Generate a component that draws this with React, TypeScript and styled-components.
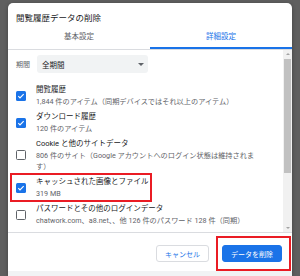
import styled, { createGlobalStyle } from "styled-components";

const GlobalStyle = createGlobalStyle`
  html, body {
    margin: 0;
    padding: 0;
    background: #5f5f5f;
    height: 276px;
    overflow: hidden;
  }
  body {
    font-family: Roboto, "Noto Sans CJK JP", sans-serif;
  }
`;

const Dialog = styled.div`
  margin: 3px 0 0 8px;
  width: 284px;
  background: #ffffff;
  border-radius: 5px 5px 0 0;
  display: flex;
  flex-direction: column;
  box-shadow: 0 1px 4px rgba(0, 0, 0, 0.3);
`;

const Title = styled.div`
  padding: 9px 0 0 8px;
  font-size: 8.5px;
  line-height: 12px;
  color: #202124;
`;

const Tabs = styled.div`
  display: flex;
  margin-top: 3px;
  border-bottom: 1px solid #dadce0;
`;

const Tab = styled.div<{ active?: boolean }>`
  flex: 1;
  text-align: center;
  font-size: 7.5px;
  line-height: 12px;
  padding: 4px 0;
  color: ${({ active }) => (active ? "#1a73e8" : "#5f6368")};
  border-bottom: 2px solid ${({ active }) => (active ? "#1a73e8" : "transparent")};
`;

const Body = styled.div`
  display: flex;
  height: 182px;
  border-bottom: 1px solid #dadce0;
`;

const Content = styled.div`
  flex: 1;
  padding: 5px 0 0 8px;
  display: flex;
  flex-direction: column;
  overflow: hidden;
`;

const PeriodRow = styled.div`
  display: flex;
  align-items: center;
  gap: 7px;
  margin-bottom: 9px;
`;

const PeriodLabel = styled.span`
  font-size: 7px;
  color: #5f6368;
  width: 14px;
`;

const Select = styled.div`
  width: 111px;
  height: 18px;
  box-sizing: border-box;
  background: #f1f3f4;
  border-radius: 3px;
  display: flex;
  align-items: center;
  justify-content: space-between;
  padding: 0 4px 0 5px;
  font-size: 7.5px;
  color: #202124;
`;

const Caret = styled.span`
  width: 0;
  height: 0;
  border-left: 3px solid transparent;
  border-right: 3px solid transparent;
  border-top: 3px solid #5f6368;
`;

const Item = styled.div`
  position: relative;
  display: flex;
  align-items: center;
  padding: 2px 0;
`;

const Box = styled.span<{ checked?: boolean }>`
  width: 10px;
  height: 10px;
  box-sizing: border-box;
  border-radius: 1.5px;
  flex-shrink: 0;
  margin-right: 10px;
  display: flex;
  align-items: center;
  justify-content: center;
  background: ${({ checked }) => (checked ? "#1a73e8" : "#ffffff")};
  border: ${({ checked }) => (checked ? "none" : "1.5px solid #5f6368")};
`;

const Texts = styled.div`
  display: flex;
  flex-direction: column;
`;

const ItemTitle = styled.div`
  font-size: 7.5px;
  line-height: 12px;
  color: #202124;
  white-space: nowrap;
`;

const ItemSub = styled.div`
  font-size: 7.2px;
  line-height: 11px;
  color: #5f6368;
  width: 224px;
`;

const Highlight = styled.div<{ w: number; h: number; l: number; t: number }>`
  position: absolute;
  left: ${({ l }) => l}px;
  top: ${({ t }) => t}px;
  width: ${({ w }) => w}px;
  height: ${({ h }) => h}px;
  border: 2px solid #ea1c24;
  box-sizing: border-box;
  pointer-events: none;
`;

const Scrollbar = styled.div`
  width: 9px;
  background: #f1f1f1;
  display: flex;
  flex-direction: column;
  align-items: center;
`;

const Arrow = styled.span<{ down?: boolean }>`
  margin: 3px 0;
  width: 0;
  height: 0;
  border-left: 2px solid transparent;
  border-right: 2px solid transparent;
  ${({ down }) =>
    down ? "border-top: 2px solid #a3a3a3;" : "border-bottom: 2px solid #a3a3a3;"}
`;

const Thumb = styled.div`
  width: 7px;
  height: 114px;
  background: #c1c1c1;
  margin-top: 1px;
`;

const Spacer = styled.div`
  flex: 1;
`;

const Footer = styled.div`
  display: flex;
  justify-content: flex-end;
  align-items: flex-start;
  gap: 13px;
  padding: 12px 10px 0 0;
  height: 38px;
  box-sizing: border-box;
`;

const Button = styled.button<{ primary?: boolean }>`
  position: relative;
  height: 17px;
  padding: 0 8px;
  border-radius: 3px;
  font-family: inherit;
  font-size: 7px;
  cursor: pointer;
  background: ${({ primary }) => (primary ? "#1a73e8" : "#ffffff")};
  color: ${({ primary }) => (primary ? "#ffffff" : "#1a73e8")};
  border: 1px solid ${({ primary }) => (primary ? "#1a73e8" : "#dadce0")};
`;

const Bottom = styled.div`
  height: 5px;
  background: #f1f3f4;
`;

const Check = () => (
  <svg width="8" height="8" viewBox="0 0 24 24">
    <path d="M4 12.5l5 5L20 6.5" stroke="#fff" strokeWidth="3.5" fill="none" />
  </svg>
);

interface Entry {
  title: string;
  sub: string;
  checked: boolean;
  marked?: boolean;
}

const entries: Entry[] = [
  { title: "閲覧履歴", sub: "1,844 件のアイテム（同期デバイスではそれ以上のアイテム）", checked: true },
  { title: "ダウンロード履歴", sub: "120 件のアイテム", checked: true },
  {
    title: "Cookie と他のサイトデータ",
    sub: "806 件のサイト（Google アカウントへのログイン状態は維持されます）",
    checked: false,
  },
  { title: "キャッシュされた画像とファイル", sub: "319 MB", checked: true, marked: true },
  {
    title: "パスワードとその他のログインデータ",
    sub: "chatwork.com、a8.net、、他 126 件のパスワード 128 件（同期）",
    checked: false,
  },
];

export default function App() {
  return (
    <>
      <GlobalStyle />
      <Dialog>
        <Title>閲覧履歴データの削除</Title>
        <Tabs>
          <Tab>基本設定</Tab>
          <Tab active>詳細設定</Tab>
        </Tabs>
        <Body>
          <Content>
            <PeriodRow>
              <PeriodLabel>期間</PeriodLabel>
              <Select>
                全期間
                <Caret />
              </Select>
            </PeriodRow>
            {entries.map((e) => (
              <Item key={e.title}>
                <Box checked={e.checked}>{e.checked && <Check />}</Box>
                <Texts>
                  <ItemTitle>{e.title}</ItemTitle>
                  <ItemSub>{e.sub}</ItemSub>
                </Texts>
                {e.marked && <Highlight l={-6} t={-1} w={142} h={29} />}
              </Item>
            ))}
          </Content>
          <Scrollbar>
            <Arrow />
            <Thumb />
            <Spacer />
            <Arrow down />
          </Scrollbar>
        </Body>
        <Footer>
          <Button>キャンセル</Button>
          <Button primary>
            データを削除
            <Highlight l={-7} t={-10} w={75} h={35} />
          </Button>
        </Footer>
        <Bottom />
      </Dialog>
    </>
  );
}
